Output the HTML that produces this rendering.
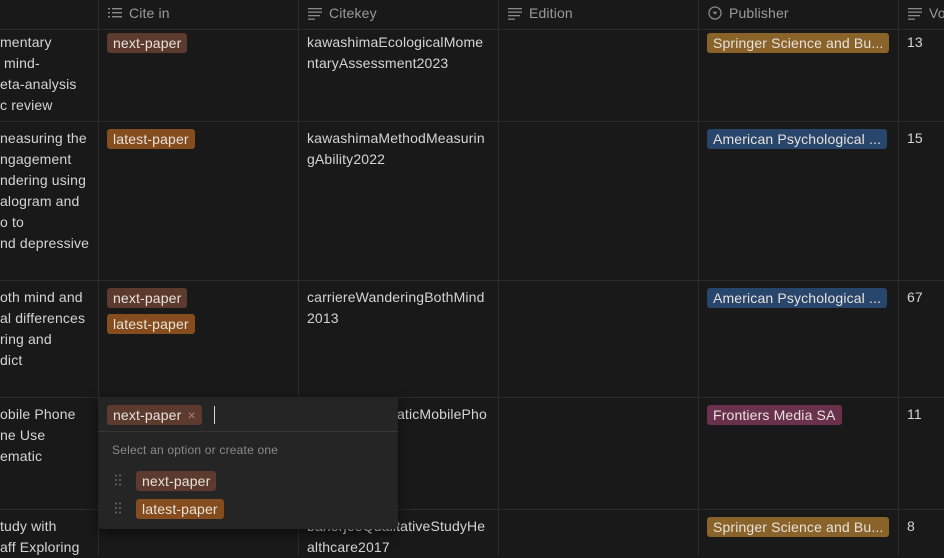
<!DOCTYPE html>
<html><head><meta charset="utf-8"><style>
*{margin:0;padding:0;box-sizing:border-box}
body{width:944px;height:555px;overflow:hidden;background:#191919;font-family:"Liberation Sans",sans-serif;font-size:14px;color:#d4d4d4;position:relative;letter-spacing:0.15px}
.a{position:absolute}
.vl{position:absolute;top:0;bottom:0;width:1px;background:#2c2c2c}
.hl{position:absolute;left:0;right:0;height:1px;background:#2c2c2c}
.h{position:absolute;top:5px;color:#9b9b9b;font-size:14px;line-height:16px;display:flex;align-items:center;gap:7px}
.t{position:absolute;line-height:21px;white-space:nowrap}
.tag{position:absolute;height:20px;line-height:20px;padding:0 6px;border-radius:3px;color:#e8e2dc;white-space:nowrap;font-size:14px}
.np{background:#5c3b2e}.lp{background:#854c1d}.sp{background:#89632a}.ap{background:#28456c}.fr{background:#69314c}
</style></head><body>
<div class="vl" style="left:98px"></div><div class="vl" style="left:298px"></div><div class="vl" style="left:498px"></div><div class="vl" style="left:698px"></div><div class="vl" style="left:898px"></div>
<div class="hl" style="top:29px"></div><div class="hl" style="top:121px"></div><div class="hl" style="top:280px"></div><div class="hl" style="top:397px"></div><div class="hl" style="top:509px"></div>

<div class="h" style="left:108px"><svg width="14" height="12" viewBox="0 0 14 12"><g fill="#8a8a8a"><rect x="0" y="1" width="2" height="1.4"/><rect x="0" y="5" width="2" height="1.4"/><rect x="0" y="9" width="2" height="1.4"/><rect x="4" y="1" width="10" height="1.4"/><rect x="4" y="5" width="10" height="1.4"/><rect x="4" y="9" width="10" height="1.4"/></g></svg>Cite in</div>
<div class="h" style="left:308px"><svg width="14" height="13" viewBox="0 0 14 13"><g fill="#8a8a8a"><rect x="0" y="1" width="14" height="1.3"/><rect x="0" y="4.5" width="14" height="1.3"/><rect x="0" y="8" width="12" height="1.3"/><rect x="0" y="11.5" width="7" height="1.3"/></g></svg>Citekey</div>
<div class="h" style="left:508px"><svg width="14" height="13" viewBox="0 0 14 13"><g fill="#8a8a8a"><rect x="0" y="1" width="14" height="1.3"/><rect x="0" y="4.5" width="14" height="1.3"/><rect x="0" y="8" width="12" height="1.3"/><rect x="0" y="11.5" width="7" height="1.3"/></g></svg>Edition</div>
<div class="h" style="left:708px"><svg width="14" height="14" viewBox="0 0 14 14"><circle cx="7" cy="7" r="6" fill="none" stroke="#8a8a8a" stroke-width="1.3"/><path d="M4.5 5.8h5L7 8.8z" fill="#8a8a8a"/></svg>Publisher</div>
<div class="h" style="left:908px"><svg width="14" height="13" viewBox="0 0 14 13"><g fill="#8a8a8a"><rect x="0" y="1" width="14" height="1.3"/><rect x="0" y="4.5" width="14" height="1.3"/><rect x="0" y="8" width="12" height="1.3"/><rect x="0" y="11.5" width="7" height="1.3"/></g></svg>Vo</div>

<!-- row 1 -->
<div class="t" style="left:0;top:32px">mentary<br>&nbsp;mind-<br>eta-analysis<br>c review</div>
<div class="tag np" style="left:107px;top:33px">next-paper</div>
<div class="t" style="left:307px;top:32px">kawashimaEcologicalMome<br>ntaryAssessment2023</div>
<div class="tag sp" style="left:707px;top:33px">Springer Science and Bu...</div>
<div class="t" style="left:907px;top:32px">13</div>

<!-- row 2 -->
<div class="t" style="left:0;top:128px">neasuring the<br>ngagement<br>ndering using<br>alogram and<br>o to<br>nd depressive</div>
<div class="tag lp" style="left:107px;top:129px">latest-paper</div>
<div class="t" style="left:307px;top:128px">kawashimaMethodMeasurin<br>gAbility2022</div>
<div class="tag ap" style="left:707px;top:129px">American Psychological ...</div>
<div class="t" style="left:907px;top:128px">15</div>

<!-- row 3 -->
<div class="t" style="left:0;top:287px">oth mind and<br>al differences<br>ring and<br>dict</div>
<div class="tag np" style="left:107px;top:288px">next-paper</div>
<div class="tag lp" style="left:107px;top:314px">latest-paper</div>
<div class="t" style="left:307px;top:287px">carriereWanderingBothMind<br>2013</div>
<div class="tag ap" style="left:707px;top:288px">American Psychological ...</div>
<div class="t" style="left:907px;top:287px">67</div>

<!-- row 4 -->
<div class="t" style="left:0;top:404px">obile Phone<br>ne Use<br>ematic</div>
<div class="t" style="left:397px;top:404px">aticMobilePho</div>
<div class="tag fr" style="left:707px;top:405px">Frontiers Media SA</div>
<div class="t" style="left:907px;top:404px">11</div>

<!-- row 5 -->
<div class="t" style="left:0;top:516px">tudy with<br>aff Exploring</div>
<div class="t" style="left:307px;top:516px">banerjeeQualitativeStudyHe<br>althcare2017</div>
<div class="tag sp" style="left:707px;top:517px">Springer Science and Bu...</div>
<div class="t" style="left:907px;top:516px">8</div>

<!-- popup -->
<div class="a" style="left:98px;top:397px;width:300px;height:132px;background:#252525;border-radius:4px;box-shadow:0 4px 12px rgba(0,0,0,.5)">
  <div class="tag np" style="left:9px;top:8px;padding-right:6px">next-paper <span style="color:#a0857a;margin-left:2px">×</span></div>
  <div class="a" style="left:116px;top:9px;width:1px;height:18px;background:#d4d4d4"></div>
  <div class="a" style="left:0;top:34px;width:300px;height:1px;background:#363636"></div>
  <div class="a" style="left:14px;top:46px;font-size:12px;color:#8a8a8a;letter-spacing:0.2px">Select an option or create one</div>
  <svg class="a" style="left:17px;top:77px" width="6" height="12" viewBox="0 0 6 12"><g fill="#6a6a6a"><circle cx="1" cy="1.5" r="1"/><circle cx="5" cy="1.5" r="1"/><circle cx="1" cy="6" r="1"/><circle cx="5" cy="6" r="1"/><circle cx="1" cy="10.5" r="1"/><circle cx="5" cy="10.5" r="1"/></g></svg>
  <div class="tag np" style="left:38px;top:74px">next-paper</div>
  <svg class="a" style="left:17px;top:105px" width="6" height="12" viewBox="0 0 6 12"><g fill="#6a6a6a"><circle cx="1" cy="1.5" r="1"/><circle cx="5" cy="1.5" r="1"/><circle cx="1" cy="6" r="1"/><circle cx="5" cy="6" r="1"/><circle cx="1" cy="10.5" r="1"/><circle cx="5" cy="10.5" r="1"/></g></svg>
  <div class="tag lp" style="left:38px;top:102px">latest-paper</div>
</div>
</body></html>
